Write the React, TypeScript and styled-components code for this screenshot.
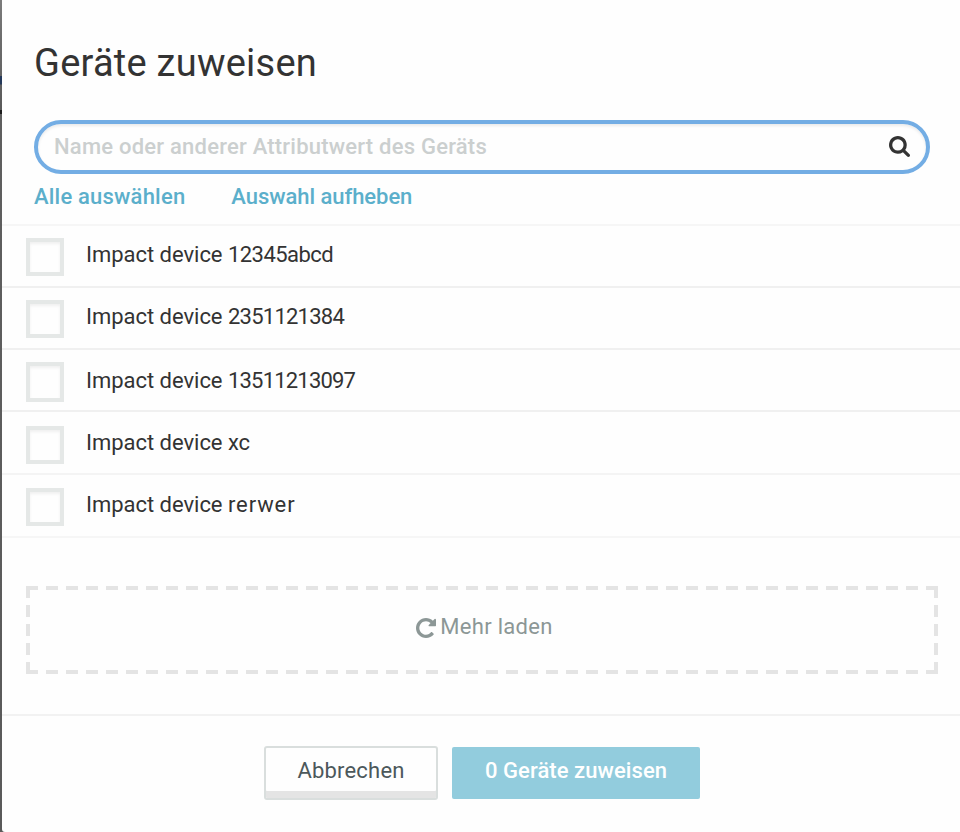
import React from "react";
import styled, { createGlobalStyle } from "styled-components";

const GlobalStyle = createGlobalStyle`
  *, *::before, *::after { box-sizing: border-box; }
  body { margin: 0; background: #5a5a5a; font-family: Roboto, "Liberation Sans", sans-serif; }
  button, input { font-family: inherit; }
`;

const Page = styled.div`
  width: 960px;
  height: 832px;
  padding-left: 2px;
  overflow: hidden;
  background: linear-gradient(#7c7c7c 0, #6c6c6c 40px, #646464 76px, #24395a 76px, #24395a 84px, #606060 85px, #5a5a5a 110px, #1c1c1c 110px, #1c1c1c 114px, #5f5f5f 114px, #5a5a5a 100%);
`;

const Dialog = styled.section`
  display: flex;
  flex-direction: column;
  height: 832px;
  background: #fefefe;
  border-bottom-left-radius: 3px;
  color: #333;
`;

const Header = styled.header`
  height: 224px;
  padding: 38px 30px 0 32px;
`;

const Title = styled.h1`
  margin: 0 0 32px;
  height: 50px;
  font-size: 38px;
  line-height: 51px;
  font-weight: 400;
  letter-spacing: 0.25px;
  white-space: nowrap;
`;

const SearchBox = styled.label`
  display: flex;
  align-items: center;
  height: 54px;
  padding: 0 16px 2px;
  border: 4px solid #73ade4;
  border-radius: 27px;
  box-shadow: inset 0 2px 3px rgba(0, 0, 0, 0.08);
`;

const SearchInput = styled.input`
  flex: 1;
  height: 44px;
  padding: 0;
  border: 0;
  outline: 0;
  background: transparent;
  font-size: 22px;
  font-weight: 500;
  letter-spacing: 0.22px;
  &::placeholder { color: #cbcfcf; opacity: 1; }
`;

const Links = styled.nav`
  display: flex;
  gap: 46px;
  padding-top: 8px;
`;

const TextLink = styled.a<{ $spacing: number }>`
  font-size: 22px;
  line-height: 30px;
  font-weight: 500;
  letter-spacing: ${(p) => p.$spacing}px;
  color: #5bafcb;
  white-space: nowrap;
`;

const List = styled.ul`
  height: 362px;
  margin: 0;
  padding: 0;
  list-style: none;
`;

const Row = styled.li<{ $height: number; $shift: number; $line: string }>`
  display: flex;
  align-items: flex-start;
  gap: 22px;
  height: ${(p) => p.$height}px;
  padding: ${(p) => 12 + p.$shift}px 24px 0;
  border-top: 2px solid ${(p) => p.$line};
`;

const CheckBox = styled.span<{ $height: number }>`
  flex: none;
  width: 38px;
  height: ${(p) => p.$height}px;
  border: 4px solid #e5e8e7;
  box-shadow: inset 0 2px 3px rgba(0, 0, 0, 0.06);
`;

const DeviceName = styled.span<{ $drop: number }>`
  margin-top: ${(p) => p.$drop}px;
  font-size: 22px;
  line-height: 30px;
  letter-spacing: -0.03px;
  white-space: pre;
`;

const DeviceId = styled.span<{ $spacing: number }>`
  letter-spacing: ${(p) => p.$spacing}px;
`;

const ListEnd = styled.li`
  height: 2px;
  background: #f6f6f6;
`;

const LoadMore = styled.button`
  --dash-x: repeating-linear-gradient(90deg, #e4e4e4 0 12px, transparent 12px 20px);
  --dash-y: repeating-linear-gradient(180deg, #e4e4e4 0 12px, transparent 12px 19px);
  display: flex;
  align-items: center;
  justify-content: center;
  gap: 4px;
  flex: none;
  height: 88px;
  margin: 0 22px 40px 24px;
  padding: 0 0 8px 5px;
  border: 0;
  background:
    var(--dash-x) top / 100% 4px no-repeat,
    var(--dash-x) bottom / 100% 4px no-repeat,
    var(--dash-y) left / 4px 100% no-repeat,
    var(--dash-y) right / 4px 100% no-repeat;
  font-size: 22px;
  letter-spacing: 0.3px;
  color: #8c9796;
`;

const Footer = styled.footer`
  display: flex;
  justify-content: center;
  align-items: flex-start;
  gap: 14px;
  flex: 1;
  padding: 30px 0 0 2px;
  border-top: 2px solid #f2f2f2;
`;

const CancelButton = styled.button`
  width: 174px;
  height: 54px;
  padding: 0 0 5px;
  border: 2px solid #d9dedd;
  border-radius: 3px;
  background: #fefefe;
  box-shadow: inset 0 -7px 0 #e4e4e4;
  font-size: 22px;
  letter-spacing: 0.2px;
  color: #4c585b;
`;

const AssignButton = styled.button`
  width: 248px;
  height: 52px;
  margin-top: 1px;
  padding: 0 0 5px;
  border: 0;
  border-radius: 2px;
  background: #92ccdd;
  font-size: 22px;
  font-weight: 500;
  letter-spacing: 0.07px;
  color: #fff;
`;

const SearchIcon = styled.svg`
  flex: none;
  width: 21px;
  height: 21px;
  fill: #333;
`;

const ReloadIcon = styled.svg`
  flex: none;
  width: 20px;
  height: 20px;
  margin-top: 4px;
  fill: #8c9796;
`;

const devices = [
  { id: "12345abcd", height: 62, shift: 0, drop: 2, box: 38, spacing: -0.53, line: "#f6f6f6" },
  { id: "2351121384", height: 62, shift: 0, drop: 2, box: 38, spacing: -0.75, line: "#f0f0f0" },
  { id: "13511213097", height: 62, shift: 0, drop: 4, box: 40, spacing: -0.8, line: "#f0f0f0" },
  { id: "xc", height: 63, shift: 2, drop: 2, box: 38, spacing: -0.2, line: "#f0f0f0" },
  { id: "rerwer", height: 63, shift: 1, drop: 2, box: 38, spacing: 0.9, line: "#f4f4f4" },
];

export default function App() {
  return (
    <Page>
      <GlobalStyle />
      <Dialog role="dialog">
        <Header>
          <Title>Geräte zuweisen</Title>
          <SearchBox>
            <SearchInput placeholder="Name oder anderer Attributwert des Geräts" />
            <SearchIcon viewBox="0 128 1664 1664">
              <path d="M1152 832q0-185-131.5-316.5t-316.5-131.5-316.5 131.5-131.5 316.5 131.5 316.5 316.5 131.5 316.5-131.5 131.5-316.5zm512 832q0 52-38 90t-90 38q-54 0-90-38l-343-342q-179 124-399 124-143 0-273.5-55.5t-225-150-150-225-55.5-273.5 55.5-273.5 150-225 225-150 273.5-55.5 273.5 55.5 225 150 150 225 55.5 273.5q0 220-124 399l343 343q37 37 37 90z" />
            </SearchIcon>
          </SearchBox>
          <Links>
            <TextLink $spacing={0.2}>Alle auswählen</TextLink>
            <TextLink $spacing={-0.05}>Auswahl aufheben</TextLink>
          </Links>
        </Header>
        <List>
          {devices.map((d) => (
            <Row key={d.id} $height={d.height} $shift={d.shift} $line={d.line}>
              <CheckBox role="checkbox" aria-checked={false} $height={d.box} />
              <DeviceName $drop={d.drop}>
                Impact device <DeviceId $spacing={d.spacing}>{d.id}</DeviceId>
              </DeviceName>
            </Row>
          ))}
          <ListEnd />
        </List>
        <LoadMore>
          <ReloadIcon viewBox="128 128 1536 1536">
            <path d="M1664 256v448q0 26-19 45t-45 19h-448q-42 0-59-40-17-39 14-69l138-138q-148-137-349-137-104 0-198.5 40.5t-163.5 109.5-109.5 163.5-40.5 198.5 40.5 198.5 109.5 163.5 163.5 109.5 198.5 40.5q119 0 225-52t179-147q7-10 23-12 15 0 25 9l137 138q9 8 9.5 20.5t-7.5 22.5q-109 132-264 204.5t-327 72.5q-156 0-298-61t-245-164-164-245-61-298 61-298 164-245 245-164 298-61q147 0 284.5 55.5t244.5 156.5l130-129q29-31 70-14 39 17 39 59z" />
          </ReloadIcon>
          <span>Mehr laden</span>
        </LoadMore>
        <Footer>
          <CancelButton>Abbrechen</CancelButton>
          <AssignButton>0 Geräte zuweisen</AssignButton>
        </Footer>
      </Dialog>
    </Page>
  );
}
